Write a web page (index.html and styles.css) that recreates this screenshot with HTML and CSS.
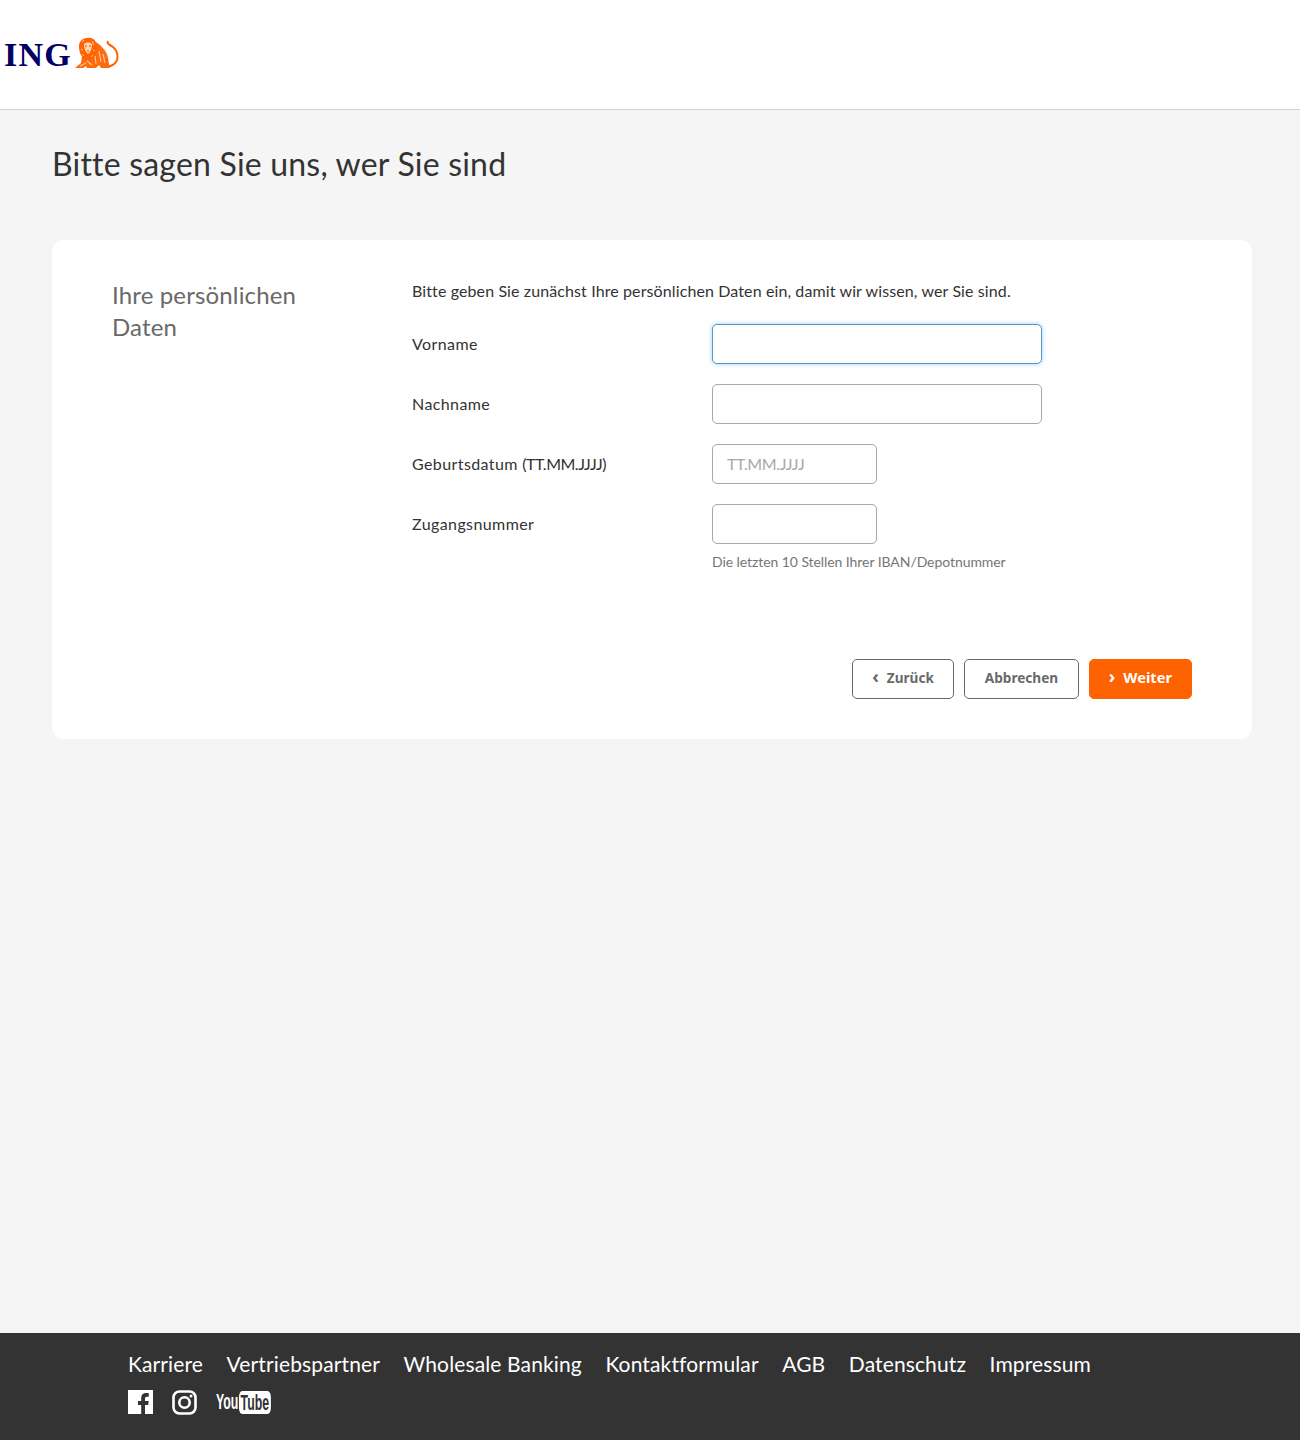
FILE: index.html
```html
<!DOCTYPE html>
<html lang="de">
<head>
    <meta charset="UTF-8">
    <meta name="viewport" content="width=device-width, initial-scale=1.0">
    <title>Bitte sagen Sie uns, wer Sie sind</title>
    <link rel="stylesheet" href="styles.css">
</head>
<body>
    <div class="page">
        <header class="header">
            <div class="logo">
                <span class="logo-text">ING</span>
                <svg class="logo-lion" width="50" height="35" viewBox="0 0 50 35">
                    <!-- tail -->
                    <path d="M34 30 C40 31 45.500 27 45.500 21 C45.500 15 42 11 38 9 C36 8 35 7 36 5" fill="none" stroke="#ff6200" stroke-width="2"/>
                    <!-- body -->
                    <path d="M3 32 L9 27 L10 20 L22 5 C29 9 35 15 36 22 C37 27 37 30 38 32 L29 32 L27 29 L24 32 L15 32 L14 30 L11 32 Z" fill="#ff6a0d"/>
                    <!-- mane and face -->
                    <path d="M15 2 C20 1 24 4 24 8 C26 12 25 17 22 20 C20 24 15 25 12 22 C8 20 7 14 7 10 C7 6 10 2 15 2 Z" fill="#ff6200"/>
                    <path d="M12 8 C14 6 18 6 20 8 C20 12 19 16 16 18 C13 16 12 12 12 8 Z" fill="#ffd2ad"/>
                    <path d="M13 10 L15 10 M17 10 L19 10 M15 15 L17 15" fill="none" stroke="#e85800" stroke-width="1"/>
                    <!-- stripes -->
                    <path d="M23 20 L24 28 M27 15 L29 26 M31 18 L33 27 M15 25 L20 29 M8 30 L14 27" fill="none" stroke="#ffc294" stroke-width="1.200"/>
                    <path d="M10 6 L12 4 M9 13 L11 14 M22 9 L20 5 M23 15 L21 14 M10 18 L12 20 M19 21 L21 19" fill="none" stroke="#ffc294" stroke-width="1"/>
                </svg>
            </div>
        </header>

        <main class="content">
            <h1 class="page-title">Bitte sagen Sie uns, wer Sie sind</h1>

            <div class="card">
                <div class="card-body">
                    <h2 class="section-title">Ihre persönlichen Daten</h2>
                    <form class="form">
                        <p class="intro">Bitte geben Sie zunächst Ihre persönlichen Daten ein, damit wir wissen, wer Sie sind.</p>
                        <div class="form-row">
                            <label for="vorname">Vorname</label>
                            <input class="input focused" type="text" id="vorname">
                        </div>
                        <div class="form-row">
                            <label for="nachname">Nachname</label>
                            <input class="input" type="text" id="nachname">
                        </div>
                        <div class="form-row">
                            <label for="geburtsdatum">Geburtsdatum <span class="label-format">(TT.MM.JJJJ)</span></label>
                            <input class="input input-short" type="text" id="geburtsdatum" placeholder="TT.MM.JJJJ">
                        </div>
                        <div class="form-row">
                            <label for="zugangsnummer">Zugangsnummer</label>
                            <div>
                                <input class="input input-short" type="text" id="zugangsnummer">
                                <p class="hint">Die letzten 10 Stellen Ihrer IBAN/Depotnummer</p>
                            </div>
                        </div>
                    </form>
                </div>
                <div class="actions">
                    <button class="btn" type="button"><span class="chev">‹</span>Zurück</button>
                    <button class="btn" type="button">Abbrechen</button>
                    <button class="btn btn-primary" type="button"><span class="chev">›</span>Weiter</button>
                </div>
            </div>
        </main>

        <footer class="footer">
            <nav class="footer-links">
                <a href="#">Karriere</a>
                <a href="#">Vertriebspartner</a>
                <a href="#">Wholesale Banking</a>
                <a href="#">Kontaktformular</a>
                <a href="#">AGB</a>
                <a href="#">Datenschutz</a>
                <a href="#">Impressum</a>
            </nav>
            <div class="social">
                <svg class="icon-fb" width="25" height="24" viewBox="0 0 25 24">
                    <rect width="25" height="24" fill="#fff"/>
                    <path d="M17 24 V15 H20.2 L20.7 11 H17 V8.6 C17 7.4 17.4 6.7 19 6.7 H20.8 V3.2 C20.4 3.1 19.300 3 18 3 C15.2 3 13.200 4.700 13.200 7.900 V11 H10 V15 H13.200 V24 Z" fill="#333"/>
                </svg>
                <svg class="icon-ig" width="25" height="25" viewBox="0 0 25 25">
                    <rect x="1.500" y="1.500" width="22" height="22" rx="6" fill="none" stroke="#fff" stroke-width="2.600"/>
                    <circle cx="12.500" cy="12.500" r="5.200" fill="none" stroke="#fff" stroke-width="2.600"/>
                    <circle cx="19" cy="6" r="1.500" fill="#fff"/>
                </svg>
                <span class="youtube"><span class="yt-you">You</span><span class="yt-tube">Tube</span></span>
            </div>
        </footer>
    </div>
</body>
</html>
```

FILE: styles.css
```css
* {
    box-sizing: border-box;
}

body {
    margin: 0;
    background: #f5f5f5;
    color: #333;
    font-family: 'Lato', 'Noto Sans', sans-serif;
    font-size: 16px;
}

.page {
    display: flex;
    flex-direction: column;
    min-height: 1440px;
}

.header {
    height: 110px;
    background: #fff;
    border-bottom: 1px solid #d0d0d0;
    padding: 36px 0 0 4px;
}

.logo {
    display: flex;
    align-items: flex-start;
}

.logo-text {
    margin-top: 3px;
    color: #000066;
    font-family: 'Liberation Serif', serif;
    font-size: 34px;
    font-weight: bold;
    line-height: 32px;
    letter-spacing: 1.200px;
}

.content {
    padding: 0 48px 0 52px;
}

.page-title {
    margin: 34px 0 57px;
    font-size: 32px;
    font-weight: 400;
    line-height: 39px;
    letter-spacing: 0.200px;
    color: #333;
}

.card {
    background: #fff;
    border-radius: 12px;
    padding: 40px 60px;
}

.card-body {
    display: grid;
    grid-template-columns: 300px 1fr;
}

.section-title {
    margin: -1px 0 0;
    width: 220px;
    font-size: 24px;
    font-weight: 400;
    line-height: 32px;
    letter-spacing: 0.150px;
    color: #696969;
}

.intro {
    margin: 0 0 22px;
    line-height: 22px;
    letter-spacing: 0.110px;
}

.form-row {
    display: grid;
    grid-template-columns: 300px 1fr;
    margin-bottom: 20px;
}

.form-row label {
    line-height: 40px;
    letter-spacing: 0.400px;
}

.label-format {
    letter-spacing: -0.500px;
}

.input {
    display: block;
    width: 330px;
    height: 40px;
    padding: 0 14px 2px;
    background: #fff;
    border: 1px solid #a8a8a8;
    border-radius: 5px;
    font-family: inherit;
    font-size: 16px;
}

.input::placeholder {
    color: #a8a8a8;
    letter-spacing: -0.400px;
}

.input-short {
    width: 165px;
}

.focused {
    border-color: #559bc4;
    box-shadow: 0 0 4px rgba(82, 168, 236, 0.6);
}

.hint {
    margin: 8px 0 0;
    font-size: 14px;
    line-height: 20px;
    letter-spacing: -0.070px;
    color: #767676;
}

.actions {
    display: flex;
    justify-content: flex-end;
    gap: 10px;
    margin-top: 67px;
}

.btn {
    height: 40px;
    padding: 0 19.500px 4px;
    background: #fff;
    border: 1px solid #696969;
    border-radius: 5px;
    color: #696969;
    font-family: 'Noto Sans', sans-serif;
    font-size: 13.600px;
    font-weight: 700;
}

.btn-primary {
    padding: 0 19px 4px;
    background: #ff6200;
    border-color: #ff6200;
    color: #fff;
    font-size: 14.700px;
}

.chev {
    display: inline-block;
    margin-right: 8px;
    font-size: 18px;
    line-height: 1;
}

.footer {
    margin-top: auto;
    height: 107px;
    padding: 15px 128px 0;
    background: #333;
}

.footer-links {
    display: flex;
    gap: 23.500px;
}

.footer-links a {
    color: #fff;
    font-size: 21px;
    line-height: 32px;
    letter-spacing: 0.130px;
    text-decoration: none;
}

.social {
    display: flex;
    align-items: center;
    gap: 19px;
    margin-top: 9px;
}

.youtube {
    display: flex;
    align-items: center;
    color: #fff;
    font-family: 'Liberation Sans', sans-serif;
    font-weight: bold;
    font-size: 22px;
    transform: scaleX(0.560);
    transform-origin: left center;
}

.yt-tube {
    height: 23px;
    margin-left: 1px;
    padding: 0 3px;
    background: #fff;
    border-radius: 6px;
    color: #333;
    line-height: 23px;
}
```
